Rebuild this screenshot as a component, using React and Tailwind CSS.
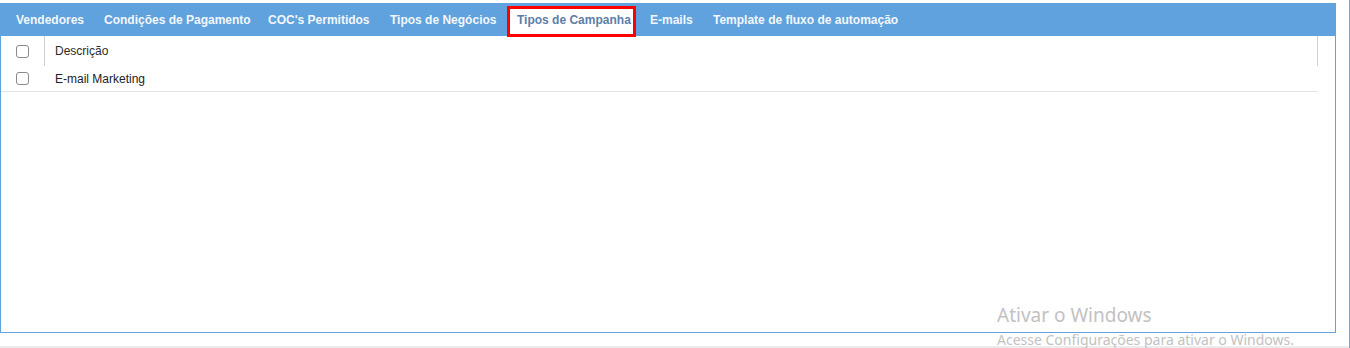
import React from 'react';

const tabs = [
  { label: 'Vendedores', w: 'w-[88px]' },
  { label: 'Condições de Pagamento', w: 'w-[164px]' },
  { label: "COC's Permitidos", w: 'w-[122px]' },
  { label: 'Tipos de Negócios', w: 'w-[127px]' },
  { label: 'Tipos de Campanha', w: 'w-[133px]', active: true },
  { label: 'E-mails', w: 'w-[63px]' },
  { label: 'Template de fluxo de automação', w: 'w-[200px]' },
];

function Box() {
  return <span className="block w-[13px] h-[13px] rounded-[3px] border border-[#8a8a8a] bg-white" />;
}

export default function App() {
  return (
    <div
      className="relative flex w-[1350px] h-[348px] bg-white overflow-hidden"
      style={{ fontFamily: '"Liberation Sans", Arial, sans-serif' }}
    >
      <div className="flex flex-col w-[1349px] pt-[3px]">
        {/* panel */}
        <div className="flex flex-col w-[1336px] h-[330px]">
          <div className="flex h-[33px] bg-[#5fa2dd] pl-[6px] items-center">
            {tabs.map((t) =>
              t.active ? (
                <div key={t.label} className={`${t.w} shrink-0 self-start mt-[3px] h-[31px]`}>
                  <div className="w-[129px] h-[31px] bg-white border-[3px] border-[#ff0000] flex items-center pl-[7px] pb-[3px] text-[12px] font-bold text-[#5b7ea8] whitespace-nowrap">
                    {t.label}
                  </div>
                </div>
              ) : (
                <div
                  key={t.label}
                  className={`${t.w} shrink-0 pl-[10px] text-[12px] font-bold text-[#f3f7fc] whitespace-nowrap`}
                >
                  {t.label}
                </div>
              )
            )}
          </div>
          <div className="flex-1 border-l border-r border-b border-[#5fa2dd]">
            <div className="w-[1317px]">
              <div className="flex h-[30px]">
                <div className="w-[44px] flex items-center justify-center border-r border-[#d0d0d0] pr-[1px]">
                  <Box />
                </div>
                <div className="flex-1 flex items-center pl-[10px] text-[12px] text-[#2b2b2b] border-r border-[#d0d0d0]">
                  Descrição
                </div>
              </div>
              <div className="flex h-[26px] border-b border-[#e4e4e4]">
                <div className="w-[44px] flex items-center justify-center pr-[1px]">
                  <Box />
                </div>
                <div className="flex-1 flex items-center pl-[10px] text-[12px] text-[#222222]">
                  E-mail Marketing
                </div>
              </div>
            </div>
          </div>
        </div>
        <div className="flex-1" />
        <div className="h-[2px] bg-[#ececec]" />
      </div>
      <div className="w-[1px] bg-[#6fa6d8]" />

      {/* Windows activation watermark */}
      <div
        className="absolute left-[997px] top-[306px] text-[#c2c2c2] leading-none pointer-events-none"
        style={{ fontFamily: '"Noto Sans", "Open Sans", sans-serif' }}
      >
        <div className="text-[19px]">Ativar o Windows</div>
        <div className="text-[14px] mt-[8px]">Acesse Configurações para ativar o Windows.</div>
      </div>
    </div>
  );
}
